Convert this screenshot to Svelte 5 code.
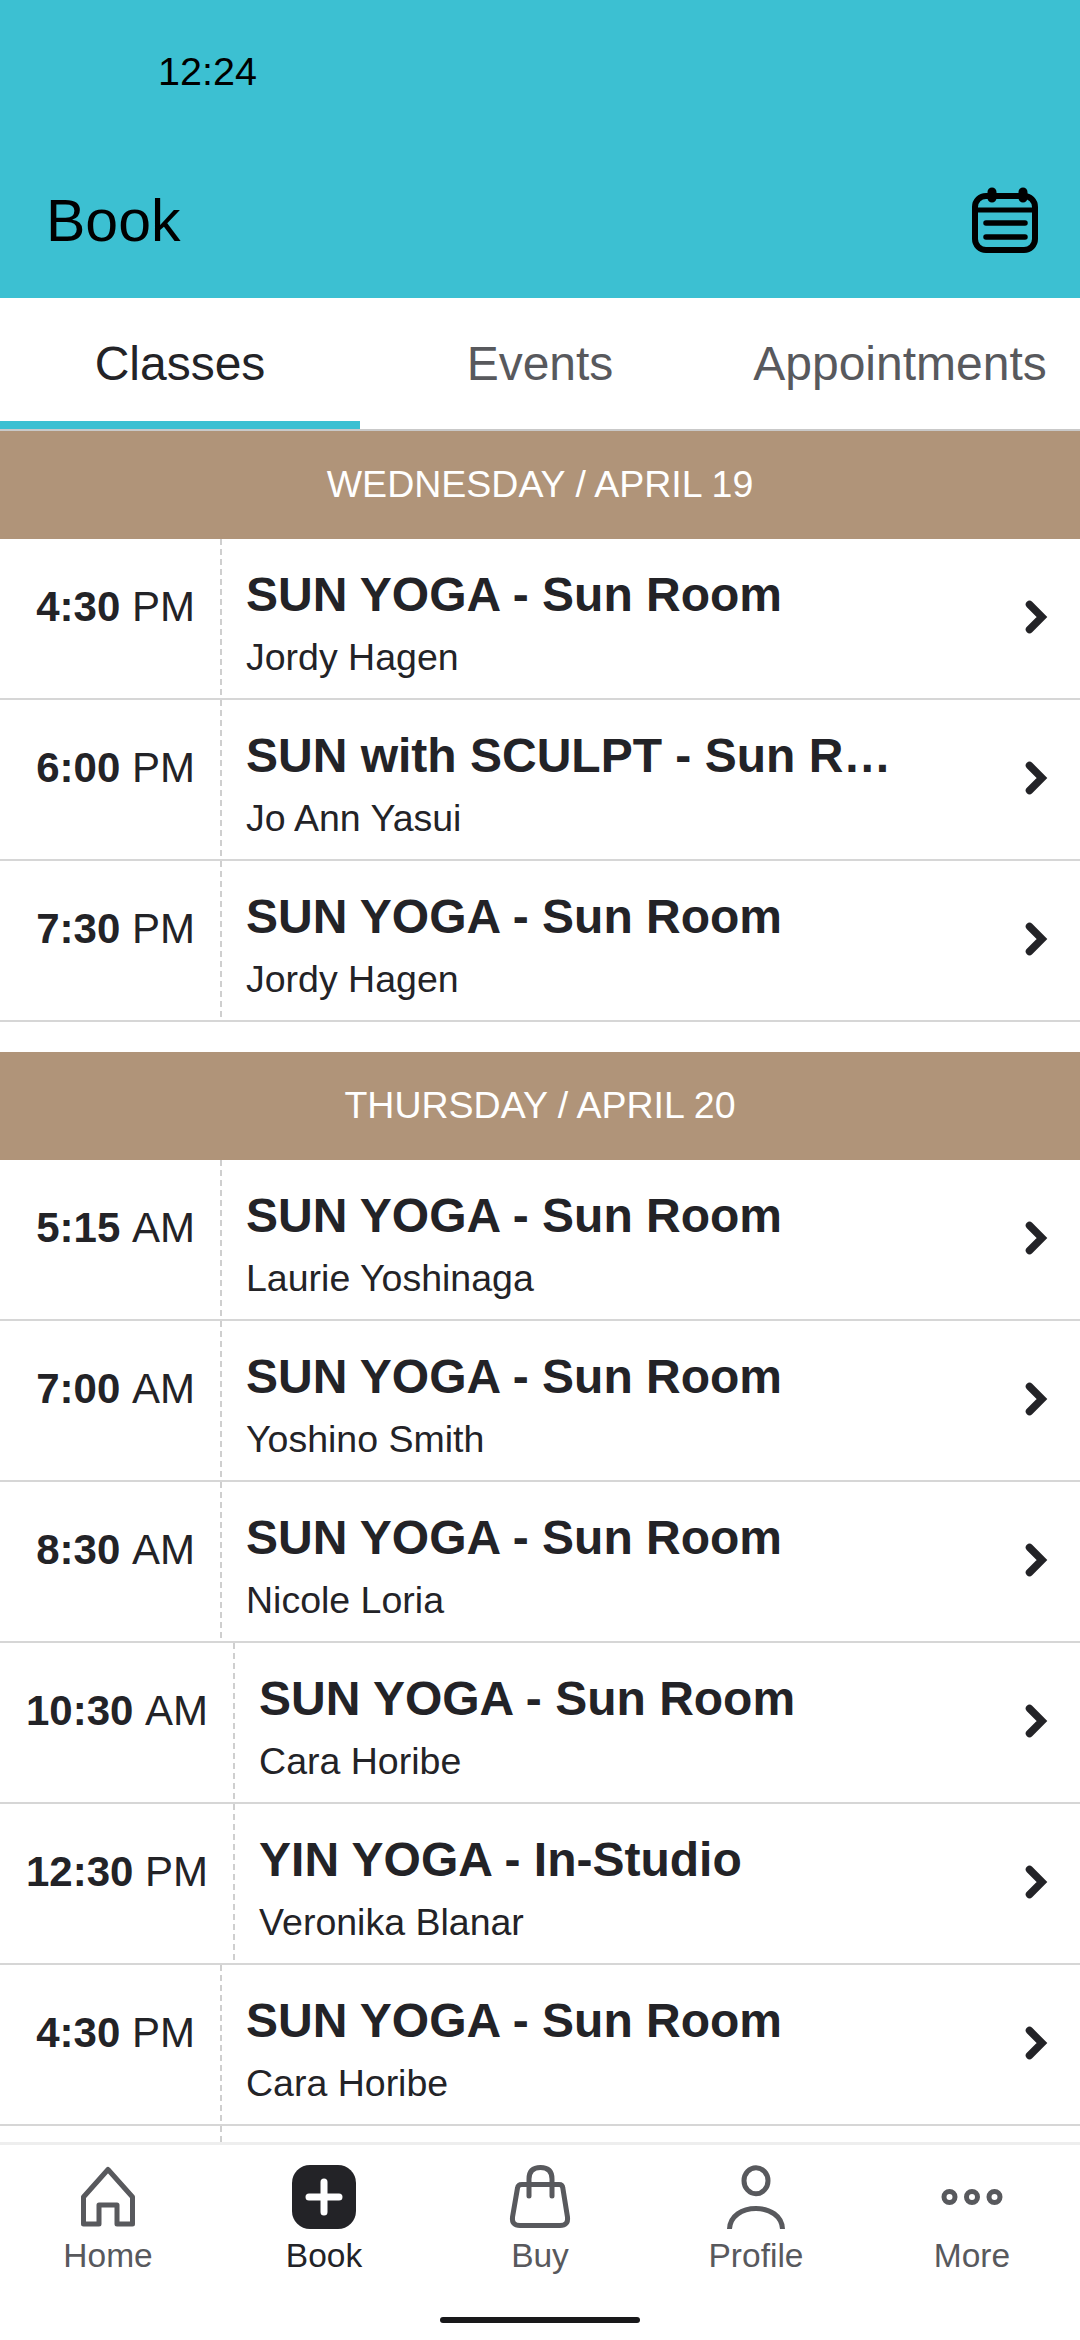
<script lang="ts">
	type Row = { time: string; ampm: string; title: string; name: string }
	type Day = { label: string; rows: Row[]; more?: boolean }

	const sun = 'SUN YOGA - Sun Room'

	const days: Day[] = [
		{
			label: 'WEDNESDAY / APRIL 19',
			rows: [
				{ time: '4:30', ampm: 'PM', title: sun, name: 'Jordy Hagen' },
				{ time: '6:00', ampm: 'PM', title: 'SUN with SCULPT - Sun Room', name: 'Jo Ann Yasui' },
				{ time: '7:30', ampm: 'PM', title: sun, name: 'Jordy Hagen' }
			]
		},
		{
			label: 'THURSDAY / APRIL 20',
			more: true,
			rows: [
				{ time: '5:15', ampm: 'AM', title: sun, name: 'Laurie Yoshinaga' },
				{ time: '7:00', ampm: 'AM', title: sun, name: 'Yoshino Smith' },
				{ time: '8:30', ampm: 'AM', title: sun, name: 'Nicole Loria' },
				{ time: '10:30', ampm: 'AM', title: sun, name: 'Cara Horibe' },
				{ time: '12:30', ampm: 'PM', title: 'YIN YOGA - In-Studio', name: 'Veronika Blanar' },
				{ time: '4:30', ampm: 'PM', title: sun, name: 'Cara Horibe' }
			]
		}
	]

	const tabs = ['Classes', 'Events', 'Appointments']
</script>

<div class="screen">
	<header class="top">
		<div class="clock">12:24</div>
		<div class="titlebar">
			<h1>Book</h1>
			<svg class="cal" width="70" height="70" viewBox="0 0 70 70" fill="none" stroke="#000">
				<rect x="5" y="10" width="60" height="54" rx="11" stroke-width="6" />
				<path d="M5 24H65" stroke-width="5" />
				<path d="M16 37H55M16 51H55" stroke-width="5.5" stroke-linecap="round" />
				<path d="M22 6V12M53 6V12" stroke-width="9" stroke-linecap="round" />
			</svg>
		</div>
	</header>

	<nav class="tabs">
		{#each tabs as tab, i}
			<div class="tab" class:active={i === 0}>{tab}</div>
		{/each}
	</nav>

	<main class="list">
		{#each days as day}
			<section class="day">
				<div class="date">{day.label}</div>
				{#each day.rows as row}
					<div class="row">
						<div class="time"><b>{row.time}</b> {row.ampm}</div>
						<div class="info">
							<div class="title">{row.title}</div>
							<div class="name">{row.name}</div>
						</div>
						<svg class="chev" width="24" height="36" viewBox="0 0 24 36" fill="none">
							<path d="M5.5 5.5L18 18L5.5 30.5" stroke="#232327" stroke-width="7.5" stroke-linecap="round" />
						</svg>
					</div>
				{/each}
				{#if day.more}
					<div class="row"><div class="time"></div></div>
				{/if}
			</section>
		{/each}
	</main>

	<footer class="bar">
		<div class="item">
			<svg width="64" height="64" viewBox="0 0 64 64" fill="none" stroke="#58595d" stroke-width="5">
				<path d="M32 4.5L56.5 32V59H41V40H23V59H7.5V32Z" stroke-linejoin="round" />
			</svg>
			<span>Home</span>
		</div>
		<div class="item on">
			<svg width="64" height="64" viewBox="0 0 64 64">
				<rect width="64" height="64" rx="18" fill="#232327" />
				<path d="M32 17V47M17 32H47" stroke="#fff" stroke-width="7" stroke-linecap="round" />
			</svg>
			<span>Book</span>
		</div>
		<div class="item">
			<svg width="64" height="64" viewBox="0 0 64 64" fill="none" stroke="#58595d" stroke-width="5">
				<path d="M14 19.5H51Q54.5 19.5 54.8 23L59.5 52Q60.5 60.5 52 60.5H12Q3.5 60.5 4.5 52L9.5 23Q10 19.5 14 19.5Z" />
				<path d="M21 31V14Q21 2.5 32.5 2.5Q44 2.5 44 14V31" stroke-linecap="round" />
			</svg>
			<span>Buy</span>
		</div>
		<div class="item">
			<svg width="64" height="64" viewBox="0 0 64 64" fill="none" stroke="#58595d" stroke-width="5">
				<ellipse cx="32" cy="15.7" rx="12" ry="13" />
				<path d="M5.5 64C6 51 18 43.5 32 43.5C46 43.5 58 51 58.5 64" />
			</svg>
			<span>Profile</span>
		</div>
		<div class="item">
			<svg width="64" height="64" viewBox="0 0 64 64" fill="none" stroke="#58595d" stroke-width="5">
				<circle cx="9.5" cy="32" r="5.5" />
				<circle cx="32" cy="32" r="5.5" />
				<circle cx="54.5" cy="32" r="5.5" />
			</svg>
			<span>More</span>
		</div>
		<div class="home-pill"></div>
	</footer>
</div>

<style>
	:global(body) {
		margin: 0;
		background: #fff;
	}

	.screen {
		width: 1080px;
		height: 2340px;
		display: flex;
		flex-direction: column;
		overflow: hidden;
		font-family: 'Liberation Sans', Arial, sans-serif;
		color: #232327;
	}

	.top {
		height: 298px;
		flex: none;
		background: #3cc0d2;
		color: #000;
		box-sizing: border-box;
		padding-top: 50px;
	}

	.clock {
		font-size: 39.5px;
		line-height: 42px;
		margin-left: 158px;
	}

	.titlebar {
		display: flex;
		justify-content: space-between;
		align-items: center;
		margin-top: 94px;
		padding: 0 40px 0 46px;
	}

	h1 {
		margin: 0;
		font-size: 59px;
		font-weight: 400;
		line-height: 68px;
	}

	.tabs {
		display: flex;
		height: 133px;
		flex: none;
		box-sizing: border-box;
		border-bottom: 2px solid #c9c9c9;
	}

	.tab {
		flex: 1;
		text-align: center;
		font-size: 48px;
		line-height: 131px;
		color: #58595d;
		height: 123px;
	}

	.tab.active {
		color: #232327;
		height: 131px;
		box-sizing: border-box;
		border-bottom: 8px solid #3cc0d2;
	}

	.list {
		flex: 1;
		min-height: 0;
		overflow: hidden;
	}

	.day {
		margin-bottom: 30px;
	}

	.date {
		height: 108px;
		line-height: 106px;
		text-align: center;
		background: #b09479;
		color: #fff;
		font-size: 37.5px;
	}

	.row {
		display: flex;
		height: 161px;
		box-sizing: border-box;
		border-bottom: 2px solid #d6d6d6;
	}

	.time {
		min-width: 222px;
		box-sizing: border-box;
		padding: 44px 27px 0 26px;
		text-align: right;
		font-size: 42px;
		font-kerning: none;
		line-height: 48px;
		white-space: nowrap;
		/* dash rhythm of the reference, a border-style dashed is too short */
		background: repeating-linear-gradient(#cfcfcf 0 6px, transparent 6px 10px) right / 2px 100% no-repeat;
	}

	.info {
		flex: 1;
		min-width: 0;
		padding: 26px 0 0 24px;
	}

	.title {
		max-width: 650px;
		font-size: 48px;
		font-weight: 700;
		line-height: 59px;
		white-space: nowrap;
		overflow: hidden;
		text-overflow: ellipsis;
	}

	.name {
		margin-top: 12px;
		font-size: 37.5px;
		line-height: 42px;
	}

	.chev {
		flex: none;
		align-self: center;
		margin: 0 32px 4px 0;
	}

	.bar {
		position: relative;
		flex: none;
		height: 198px;
		box-sizing: border-box;
		border-top: 3px solid #eee;
		padding-top: 20px;
		display: flex;
		background: #fff;
	}

	.item {
		flex: 1;
		display: flex;
		flex-direction: column;
		align-items: center;
		color: #58595d;
		font-size: 33.5px;
		line-height: 38px;
	}

	.item span {
		margin-top: 8px;
	}

	.item.on {
		color: #232327;
	}

	.home-pill {
		position: absolute;
		left: 440px;
		bottom: 17px;
		width: 200px;
		height: 6px;
		border-radius: 3px;
		background: #18181a;
	}
</style>
